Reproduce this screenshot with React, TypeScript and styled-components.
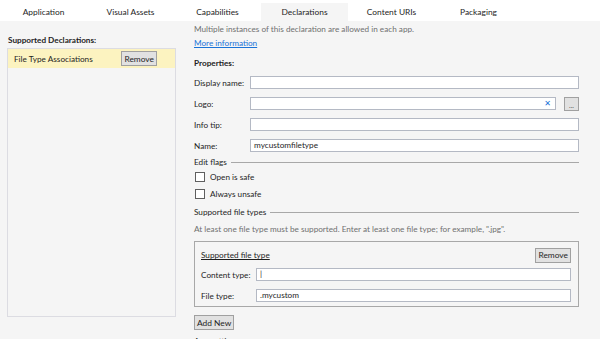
import React from "react";
import styled, { createGlobalStyle } from "styled-components";

const Global = createGlobalStyle`
  html, body { margin: 0; padding: 0; }
  body {
    width: 600px; height: 339px; overflow: hidden;
    background: #f5f5f5;
    font-family: Lato, "Open Sans", "DejaVu Sans", sans-serif;
    font-size: 8.2px;
    color: #1e1e1e;
  }
  * { box-sizing: border-box; }
`;

const Page = styled.div`
  width: 600px; height: 339px; overflow: hidden;
  display: flex; flex-direction: column;
`;

const TabBar = styled.div`
  background: #ffffff;
  height: 21px;
  padding-top: 3px;
  display: flex;
  flex-shrink: 0;
`;

const Tab = styled.div<{ $active?: boolean }>`
  width: 87px;
  height: 18px;
  display: flex; align-items: center; justify-content: center;
  background: ${(p) => (p.$active ? "#f5f5f5" : "#ffffff")};
  color: #1e1e1e;
  font-size: 8.4px;
`;

const Body = styled.div`
  flex: 1;
  display: flex;
  min-height: 0;
`;

const Left = styled.div`
  width: 194px;
  flex-shrink: 0;
  padding: 12px 18px 0 7px;
  display: flex; flex-direction: column;
  & > * { flex-shrink: 0; }
`;

const BoldTitle = styled.div`
  font-weight: 700;
  height: 15px;
  padding-left: 1px;
  line-height: 14px;
`;

const ListBox = styled.div`
  height: 269px;
  border: 1px solid #dcdce2;
`;

const ListItem = styled.div`
  height: 19px;
  background: #fcf3c0;
  display: flex; align-items: center; justify-content: space-between;
  padding: 0 18px 0 6px;
`;

const Button = styled.button`
  font-family: inherit;
  font-size: 8.4px;
  color: #1e1e1e;
  background: #e1e1e1;
  border: 1px solid #a0a0a0;
  padding: 0 2px;
  height: 15px;
  line-height: 12px;
  border-radius: 0;
`;

const Right = styled.div`
  flex: 1;
  padding: 1px 21px 0 0;
  display: flex; flex-direction: column;
  white-space: nowrap;
  & > * { flex-shrink: 0; }
`;

const Muted = styled.div<{ $mt?: number }>`
  color: #707070;
  height: 14px;
  line-height: 14px;
  margin-top: ${(p) => p.$mt ?? 0}px;
`;

const Link = styled.div`
  color: #1a73d8;
  text-decoration: underline;
  height: 14px;
  line-height: 14px;
`;

const SectionTitle = styled.div`
  font-weight: 700;
  margin-top: 6px;
  height: 14px;
  line-height: 14px;
`;

const FieldRow = styled.div<{ $first?: boolean }>`
  display: flex; align-items: center;
  height: 21px;
  flex-shrink: 0;
  margin-top: ${(p) => (p.$first ? 2 : 0)}px;
`;

const Label = styled.div<{ $w?: number }>`
  width: ${(p) => p.$w ?? 56}px;
  flex-shrink: 0;
`;

const Input = styled.div`
  flex: 1;
  height: 13px;
  background: #ffffff;
  border: 1px solid #b4b9c4;
  display: flex; align-items: center; justify-content: space-between;
  padding: 0 4px 0 3px;
  line-height: 11px;
`;

const ClearX = styled.span`
  color: #1a73d8;
  font-weight: 700;
  font-size: 8px;
`;

const DotsButton = styled.div`
  width: 15px; height: 14px;
  margin-left: 8px;
  background: #e1e1e1;
  border: 1px solid #a0a0a0;
  display: flex; align-items: flex-end; justify-content: center;
  font-size: 7px; line-height: 10px;
  color: #555;
`;

const Legend = styled.div<{ $mt?: number }>`
  display: flex; align-items: center; gap: 4px;
  height: 12px;
  margin-top: ${(p) => p.$mt ?? 0}px;
  &::after {
    content: "";
    flex: 1;
    border-top: 1px solid #a8a8a8;
  }
`;

const CheckRow = styled.div`
  display: flex; align-items: center; gap: 5px;
  height: 17px;
  padding-left: 1px;
`;

const Box = styled.span`
  width: 10px; height: 10px;
  background: #ffffff;
  border: 1px solid #5f5f5f;
`;

const GroupBox = styled.div`
  margin-top: 5px;
  border: 1px solid #a8a8a8;
  padding: 4px 7px 0 6px;
  display: flex; flex-direction: column;
`;

const GroupHeader = styled.div`
  display: flex; align-items: center; justify-content: space-between;
  height: 18px;
`;

const Underlined = styled.span`
  text-decoration: underline;
`;

const AddRow = styled.div`
  margin-top: 8px;
  height: 15px;
  display: flex;
`;

const Cut = styled.div`
  margin-top: 4px;
  line-height: 14px;
`;

export default function App() {
  return (
    <>
      <Global />
      <Page>
        <TabBar>
          <Tab>Application</Tab>
          <Tab>Visual Assets</Tab>
          <Tab>Capabilities</Tab>
          <Tab $active>Declarations</Tab>
          <Tab>Content URIs</Tab>
          <Tab>Packaging</Tab>
        </TabBar>
        <Body>
          <Left>
            <BoldTitle>Supported Declarations:</BoldTitle>
            <ListBox>
              <ListItem>
                <span>File Type Associations</span>
                <Button>Remove</Button>
              </ListItem>
            </ListBox>
          </Left>
          <Right>
            <Muted>Multiple instances of this declaration are allowed in each app.</Muted>
            <Link>More information</Link>
            <SectionTitle>Properties:</SectionTitle>
            <FieldRow $first>
              <Label>Display name:</Label>
              <Input />
            </FieldRow>
            <FieldRow>
              <Label>Logo:</Label>
              <Input>
                <span />
                <ClearX>✕</ClearX>
              </Input>
              <DotsButton>...</DotsButton>
            </FieldRow>
            <FieldRow>
              <Label>Info tip:</Label>
              <Input />
            </FieldRow>
            <FieldRow>
              <Label>Name:</Label>
              <Input>mycustomfiletype</Input>
            </FieldRow>
            <Legend>Edit flags</Legend>
            <CheckRow>
              <Box />
              Open is safe
            </CheckRow>
            <CheckRow>
              <Box />
              Always unsafe
            </CheckRow>
            <Legend $mt={4}>Supported file types</Legend>
            <Muted $mt={4}>At least one file type must be supported. Enter at least one file type; for example, ".jpg".</Muted>
            <GroupBox>
              <GroupHeader>
                <Underlined>Supported file type</Underlined>
                <Button>Remove</Button>
              </GroupHeader>
              <FieldRow>
                <Label $w={55}>Content type:</Label>
                <Input>|</Input>
              </FieldRow>
              <FieldRow>
                <Label $w={55}>File type:</Label>
                <Input>.mycustom</Input>
              </FieldRow>
            </GroupBox>
            <AddRow>
              <Button>Add New</Button>
            </AddRow>
            <Cut>App settings</Cut>
          </Right>
        </Body>
      </Page>
    </>
  );
}
